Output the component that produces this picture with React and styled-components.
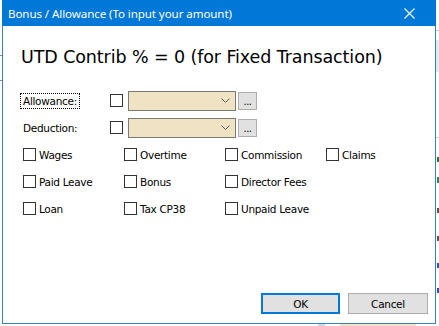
import React from "react";
import styled, { createGlobalStyle } from "styled-components";

const Global = createGlobalStyle`
  html, body { margin: 0; padding: 0; background: #ffffff; overflow: hidden; }
  #root { width: 439px; height: 326px; }
`;

const Desktop = styled.div`
  position: relative;
  width: 439px;
  height: 326px;
  background: #ffffff;
  overflow: hidden;
`;

const BgMark = styled.div`
  position: absolute;
  left: ${(p) => p.$x}px;
  top: ${(p) => p.$y}px;
  width: ${(p) => p.$w}px;
  height: ${(p) => p.$h}px;
  background: ${(p) => p.$c};
`;

const Window = styled.div`
  position: absolute;
  left: 2px;
  top: 0;
  width: 434px;
  height: 324px;
  box-sizing: border-box;
  border: 1px solid #3f7fbf;
  border-top: none;
  background: #ffffff;
  display: flex;
  flex-direction: column;
  font-family: "DejaVu Sans", Tahoma, sans-serif;
  color: #000;
`;

const TitleBar = styled.div`
  height: 26px;
  margin: 0 -1px;
  background: #0078d7;
  color: #fff;
  display: flex;
  align-items: center;
  padding-left: 6px;
  font-family: "Noto Sans", "Segoe UI", sans-serif;
  font-size: 11.6px;
  flex-shrink: 0;
`;

const TitleText = styled.span`
  flex: 1;
  white-space: nowrap;
  letter-spacing: -0.1px;
`;

const CloseBtn = styled.div`
  width: 46px;
  height: 26px;
  display: flex;
  align-items: center;
  justify-content: center;
  margin-right: 4px;
`;

const Headline = styled.div`
  margin: 21px 0 0 18px;
  font-size: 17.5px;
  line-height: 20px;
  white-space: nowrap;
  letter-spacing: -0.1px;
`;

const Form = styled.div`
  margin: 20px 0 0 19px;
  display: flex;
  flex-direction: column;
`;

const FormRow = styled.div`
  height: 27px;
  display: flex;
  align-items: center;
`;

const LabelCell = styled.div`
  width: 88px;
  font-size: 10.5px;
  letter-spacing: -0.3px;
`;

const FocusLabel = styled.span`
  outline: ${(p) => (p.$focus ? "1px dotted #000" : "none")};
  outline-offset: 1px;
  padding: 0 1px;
`;

const Box = styled.span`
  display: inline-block;
  width: 13px;
  height: 13px;
  box-sizing: border-box;
  border: 1px solid #333;
  background: #fff;
  flex-shrink: 0;
`;

const Combo = styled.div`
  width: 108px;
  height: 20px;
  box-sizing: border-box;
  margin-left: 5px;
  border: 1px solid #7a7a7a;
  background: #efe3c4;
  display: flex;
  align-items: center;
  justify-content: flex-end;
  padding-right: 5px;
`;

const DotsButton = styled.div`
  width: 19px;
  height: 18px;
  box-sizing: border-box;
  margin-left: 2px;
  border: 1px solid #adadad;
  background: #e1e1e1;
  font-size: 10px;
  display: flex;
  align-items: flex-end;
  justify-content: center;
  padding-bottom: 3px;
  line-height: 8px;
  letter-spacing: -0.5px;
`;

const Grid = styled.div`
  margin-left: 20px;
  display: grid;
  grid-template-columns: repeat(4, 101px);
  grid-auto-rows: 27px;
`;

const CheckItem = styled.label`
  display: flex;
  align-items: center;
  gap: 3px;
  font-size: 10.5px;
  letter-spacing: -0.3px;
  white-space: nowrap;
`;

const Footer = styled.div`
  margin-top: auto;
  display: flex;
  justify-content: flex-end;
  gap: 8px;
  padding: 0 7px 9px 0;
`;

const Button = styled.div`
  width: ${(p) => p.$w}px;
  height: 21px;
  box-sizing: border-box;
  border: ${(p) => (p.$default ? "2px solid #0078d7" : "1px solid #adadad")};
  background: #e1e1e1;
  display: flex;
  align-items: center;
  justify-content: center;
  font-size: 10.5px;
  letter-spacing: -0.3px;
`;

const Chevron = () => (
  <svg width="9" height="5" viewBox="0 0 9 5">
    <polyline points="0.5,0.5 4.5,4.5 8.5,0.5" fill="none" stroke="#606060" strokeWidth="1" />
  </svg>
);

const CloseIcon = () => (
  <svg width="11" height="11" viewBox="0 0 11 11">
    <path d="M0.5 0.5 L10.5 10.5 M10.5 0.5 L0.5 10.5" stroke="#fff" strokeWidth="1.1" />
  </svg>
);

const items = [
  "Wages", "Overtime", "Commission", "Claims",
  "Paid Leave", "Bonus", "Director Fees", null,
  "Loan", "Tax CP38", "Unpaid Leave", null,
];

export default function App() {
  return (
    <Desktop>
      <Global />
      <BgMark $x={436} $y={30} $w={3} $h={1} $c="#c8c8c8" />
      <BgMark $x={436} $y={40} $w={3} $h={32} $c="#dfeaf6" />
      <BgMark $x={436} $y={137} $w={3} $h={1} $c="#d0d0d0" />
      <BgMark $x={437} $y={157} $w={2} $h={5} $c="#2a7a2a" />
      <BgMark $x={437} $y={177} $w={2} $h={6} $c="#2a8a5a" />
      <BgMark $x={437} $y={208} $w={2} $h={5} $c="#555" />
      <BgMark $x={437} $y={236} $w={2} $h={5} $c="#555" />
      <BgMark $x={437} $y={263} $w={2} $h={5} $c="#3050c0" />
      <BgMark $x={437} $y={288} $w={2} $h={5} $c="#3050c0" />
      <BgMark $x={318} $y={324} $w={7} $h={2} $c="#c8dcf0" />
      <BgMark $x={340} $y={324} $w={76} $h={2} $c="#efe3c4" />
      <BgMark $x={0} $y={55} $w={2} $h={1} $c="#888" />
      <BgMark $x={0} $y={80} $w={2} $h={1} $c="#888" />
      <Window>
        <TitleBar>
          <TitleText>Bonus / Allowance (To input your amount)</TitleText>
          <CloseBtn>
            <CloseIcon />
          </CloseBtn>
        </TitleBar>
        <Headline>UTD Contrib % = 0 (for Fixed Transaction)</Headline>
        <Form>
          <FormRow>
            <LabelCell>
              <FocusLabel $focus>Allowance:</FocusLabel>
            </LabelCell>
            <Box />
            <Combo>
              <Chevron />
            </Combo>
            <DotsButton>...</DotsButton>
          </FormRow>
          <FormRow>
            <LabelCell>
              <FocusLabel>Deduction:</FocusLabel>
            </LabelCell>
            <Box />
            <Combo>
              <Chevron />
            </Combo>
            <DotsButton>...</DotsButton>
          </FormRow>
        </Form>
        <Grid>
          {items.map((t, i) =>
            t ? (
              <CheckItem key={i}>
                <Box />
                <span>{t}</span>
              </CheckItem>
            ) : (
              <span key={i} />
            )
          )}
        </Grid>
        <Footer>
          <Button $w={79} $default>OK</Button>
          <Button $w={80}>Cancel</Button>
        </Footer>
      </Window>
    </Desktop>
  );
}
